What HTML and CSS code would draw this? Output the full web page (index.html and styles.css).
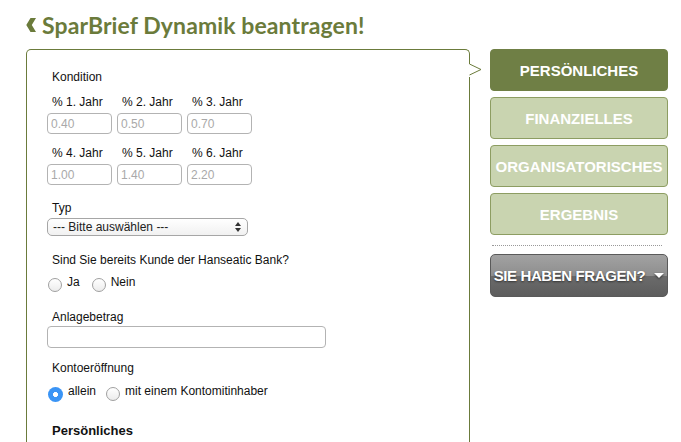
FILE: index.html
```html
<!DOCTYPE html>
<html lang="de">
<head>
<meta charset="utf-8">
<title>SparBrief Dynamik beantragen!</title>
<link rel="stylesheet" href="styles.css">
</head>
<body>
<div class="page">
  <h1 class="title">
    <svg class="chev" width="10" height="14" viewBox="0 0 10 14"><path d="M4.5 0 H10 L5.8 7 L10 14 H4.5 L0.3 7 Z" fill="#6b7b3b"/></svg>
    <span>SparBrief Dynamik beantragen!</span>
  </h1>
  <div class="main">
    <div class="formbox">
      <svg class="notch" width="14" height="13" viewBox="0 0 14 13"><rect x="0" y="0" width="1.2" height="13" fill="#fff"/><polyline points="0.5,0 12,5.5 0.5,11" fill="#fff" stroke="#6b7b3b" stroke-width="1"/></svg>
      <div class="lbl">Kondition</div>
      <div class="rates">
        <div class="rate"><div class="lbl">% 1. Jahr</div><input class="inp small" placeholder="0.40"></div>
        <div class="rate"><div class="lbl">% 2. Jahr</div><input class="inp small" placeholder="0.50"></div>
        <div class="rate"><div class="lbl">% 3. Jahr</div><input class="inp small" placeholder="0.70"></div>
      </div>
      <div class="rates second">
        <div class="rate"><div class="lbl">% 4. Jahr</div><input class="inp small" placeholder="1.00"></div>
        <div class="rate"><div class="lbl">% 5. Jahr</div><input class="inp small" placeholder="1.40"></div>
        <div class="rate"><div class="lbl">% 6. Jahr</div><input class="inp small" placeholder="2.20"></div>
      </div>
      <div class="lbl typ">Typ</div>
      <div class="selectwrap">
        <span class="selecttext">--- Bitte auswählen ---</span>
        <svg class="selarrows" width="6" height="10" viewBox="0 0 6 10"><path d="M3 0 L6 4 H0 Z M3 10 L6 6 H0 Z" fill="#333"/></svg>
      </div>
      <div class="lbl question">Sind Sie bereits Kunde der Hanseatic Bank?</div>
      <div class="radios r1">
        <span class="radio"></span><span class="rtext">Ja</span>
        <span class="radio second-radio"></span><span class="rtext">Nein</span>
      </div>
      <div class="lbl anlage">Anlagebetrag</div>
      <input class="inp wide">
      <div class="lbl konto">Kontoeröffnung</div>
      <div class="radios r2">
        <span class="radio checked"></span><span class="rtext">allein</span>
        <span class="radio second-radio2"></span><span class="rtext">mit einem Kontomitinhaber</span>
      </div>
      <div class="section">Persönliches</div>
    </div>
    <div class="sidebar">
      <div class="btn active">PERSÖNLICHES</div>
      <div class="btn">FINANZIELLES</div>
      <div class="btn">ORGANISATORISCHES</div>
      <div class="btn">ERGEBNIS</div>
      <div class="dots"></div>
      <div class="help">
        <span>SIE HABEN FRAGEN?</span>
        <svg width="10" height="6" viewBox="0 0 10 6"><path d="M0 0 H10 L5 5 Z" fill="#fff"/></svg>
      </div>
    </div>
  </div>
</div>
</body>
</html>
```
FILE: styles.css
```css
html, body {
  margin: 0;
  padding: 0;
  background: #fff;
}
body {
  font-family: "Liberation Sans", Arial, sans-serif;
  color: #111;
}
.page {
  padding-left: 26px;
  width: 642px;
}
.title {
  margin: 0;
  padding-top: 12px;
  height: 49px;
  box-sizing: border-box;
  display: flex;
  align-items: flex-start;
  gap: 6px;
  font-family: Lato, "DejaVu Sans", sans-serif;
  font-weight: 700;
  font-size: 23px;
  line-height: 26px;
  color: #6b7b3b;
  letter-spacing: 0.1px;
}
.chev {
  display: block;
  margin-top: 6px;
}
.main {
  display: flex;
  align-items: flex-start;
}
.formbox {
  position: relative;
  box-sizing: border-box;
  width: 444px;
  height: 400px;
  border: 1px solid #6b7b3b;
  border-bottom: none;
  border-radius: 5px 5px 0 0;
  padding: 20px 20px 0 20px;
}
.notch {
  position: absolute;
  left: 100%;
  top: 14px;
  margin-left: -0.5px;
}
.lbl {
  font-size: 12px;
  line-height: 14px;
  padding-left: 5px;
  white-space: nowrap;
}
.rates {
  display: flex;
  margin-top: 11px;
}
.rates.second {
  margin-top: 12px;
}
.rate {
  width: 70px;
  display: flex;
  flex-direction: column;
}
.rate .lbl {
  margin-bottom: 4px;
}
.inp {
  box-sizing: border-box;
  display: block;
  border: 1px solid #b3b3b3;
  border-radius: 4px;
  font-family: "Liberation Sans", Arial, sans-serif;
  font-size: 12px;
  padding: 0 3px;
  margin: 0;
  outline: none;
  background: #fff;
}
.inp::placeholder {
  color: #a9a9a9;
}
.inp.small {
  width: 65px;
  height: 21px;
}
.inp.wide {
  width: 279px;
  height: 22px;
  margin-top: 2px;
}
.typ {
  margin-top: 16px;
}
.selectwrap {
  position: relative;
  box-sizing: border-box;
  width: 201px;
  height: 18px;
  margin-top: 3px;
  border: 1px solid #a6a6a6;
  border-radius: 5px;
  background: linear-gradient(#ffffff, #f1f1f1);
  font-size: 12px;
  line-height: 16px;
  padding-left: 5px;
}
.selecttext {
  color: #222;
}
.selarrows {
  position: absolute;
  right: 6px;
  top: 3px;
}
.question {
  margin-top: 17px;
}
.radios {
  display: flex;
  align-items: flex-start;
  font-size: 12px;
  line-height: 14px;
  height: 17px;
}
.r1 {
  margin-top: 8px;
}
.r2 {
  margin-top: 9px;
}
.radio {
  box-sizing: border-box;
  width: 14px;
  height: 14px;
  margin-top: 3px;
  margin-left: 1px;
  border: 1px solid #a0a0a0;
  border-radius: 50%;
  background: linear-gradient(#ffffff, #ececec);
  flex: none;
}
.radio.checked {
  width: 15px;
  height: 15px;
  border: none;
  background: radial-gradient(circle, #ffffff 0 2.2px, #3a94f5 2.8px);
}
.rtext {
  margin-left: 5px;
}
.second-radio {
  margin-left: 12px;
}
.second-radio2 {
  margin-left: 10px;
}
.anlage {
  margin-top: 18px;
}
.konto {
  margin-top: 13px;
}
.section {
  margin-top: 22px;
  padding-left: 5px;
  font-size: 13px;
  font-weight: 700;
  line-height: 16px;
}
.sidebar {
  width: 178px;
  margin-left: 20px;
  display: flex;
  flex-direction: column;
}
.btn {
  box-sizing: border-box;
  height: 42px;
  margin-bottom: 6px;
  border: 1px solid #8d9d62;
  border-radius: 4px;
  background: #c9d4b0;
  color: #fff;
  font-weight: 700;
  font-size: 15px;
  letter-spacing: 0;
  display: flex;
  align-items: center;
  justify-content: center;
  white-space: nowrap;
}
.btn.active {
  background: #6f7f45;
  border-color: #6f7f45;
}
.dots {
  margin: 4px 6px 0 2px;
  border-top: 1px dotted #999;
  height: 0;
}
.help {
  box-sizing: border-box;
  height: 43px;
  margin-top: 8px;
  border: 1px solid #5a5a5a;
  border-radius: 5px;
  background: linear-gradient(#a2a2a2 0, #8e8e8e 50%, #6b6b6b 52%, #5d5d5d 100%);
  color: #fff;
  font-weight: 700;
  font-size: 15px;
  letter-spacing: -0.4px;
  text-shadow: 0 1px 2px #333;
  display: flex;
  align-items: center;
  justify-content: center;
  gap: 9px;
  white-space: nowrap;
}
.help svg {
  filter: drop-shadow(0 1px 1px #333);
}
```
